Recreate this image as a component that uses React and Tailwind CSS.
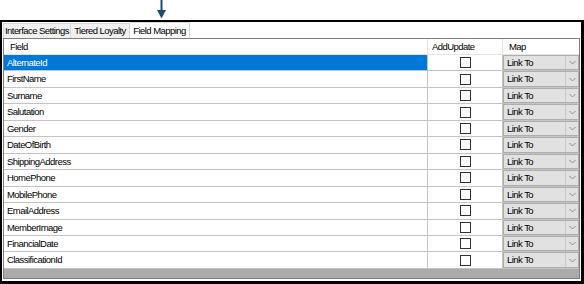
import React from 'react';

const fields = [
  'AlternateId',
  'FirstName',
  'Surname',
  'Salutation',
  'Gender',
  'DateOfBirth',
  'ShippingAddress',
  'HomePhone',
  'MobilePhone',
  'EmailAddress',
  'MemberImage',
  'FinancialDate',
  'ClassificationId',
];

const Chevron = () => (
  <svg width="7" height="5" viewBox="0 0 7 5" className="block">
    <path d="M0.5 1 L3.5 4 L6.5 1" fill="none" stroke="#8a8a8a" strokeWidth="1" />
  </svg>
);

const Row = ({ name, selected }) => (
  <div className="flex h-[16.46px] border-b border-[#c4c4c4]">
    <div
      className={
        'w-[424px] flex items-center pl-[3px] border-r border-[#c4c4c4] ' +
        (selected ? 'bg-[#0078d7] text-white' : 'bg-white text-black')
      }
    >
      {name}
    </div>
    <div className="w-[75px] flex items-center justify-center bg-white border-r border-[#c4c4c4]">
      <div className="w-[11px] h-[11px] border border-[#333] bg-white" />
    </div>
    <div className="flex-1 flex bg-[#e1e1e1] border border-[#adadad]">
      <div className="flex-1 flex items-center pl-[3px] text-black">Link To</div>
      <div className="w-[13px] flex items-center justify-center border-l border-[#c8c8c8]">
        <Chevron />
      </div>
    </div>
  </div>
);

const App = () => {
  return (
    <div className="w-[584px] h-[284px] bg-white font-['Liberation_Sans',Arial,sans-serif] text-[9.5px] tracking-[-0.55px] leading-none whitespace-nowrap">
      {/* pointer arrow */}
      <div className="h-[20px] pl-[157px]">
        <svg width="9" height="19" viewBox="0 0 9 19" className="block">
          <rect x="3.5" y="0" width="2" height="11" fill="#1d4d6b" />
          <path d="M0 10 L9 10 L4.5 18.5 Z" fill="#1d4d6b" />
        </svg>
      </div>

      <div className="h-[264px] border-t-2 border-l-2 border-r-[3px] border-b-[3px] border-black flex flex-col">
        {/* tabs */}
        <div className="h-[16px] flex items-end pl-[1px]">
          <div className="w-[68px] h-[15px] flex items-center justify-center bg-[#f0f0f0] border border-b-0 border-[#d9d9d9] text-black">
            Interface Settings
          </div>
          <div className="w-[59px] h-[15px] flex items-center justify-center bg-[#f0f0f0] border border-b-0 border-l-0 border-[#d9d9d9] text-black">
            Tiered Loyalty
          </div>
          <div className="w-[60px] h-[16px] flex items-center justify-center bg-white border border-b-0 border-l-0 border-[#d9d9d9] text-black">
            Field Mapping
          </div>
        </div>

        {/* grid */}
        <div className="ml-[1px] mr-[1px] h-[241px] border border-[#7d7d7d] flex flex-col bg-[#ababab]">
          <div className="h-[16px] flex bg-white text-black border-b border-[#e5e5e5]">
            <div className="w-[424px] flex items-center pl-[6px] border-r border-[#e5e5e5]">Field</div>
            <div className="w-[75px] flex items-center pl-[4px] border-r border-[#e5e5e5]">AddUpdate</div>
            <div className="flex-1 flex items-center pl-[6px]">Map</div>
          </div>
          {fields.map((f, i) => (
            <Row key={f} name={f} selected={i === 0} />
          ))}
        </div>
      </div>
    </div>
  );
};

export default App;
